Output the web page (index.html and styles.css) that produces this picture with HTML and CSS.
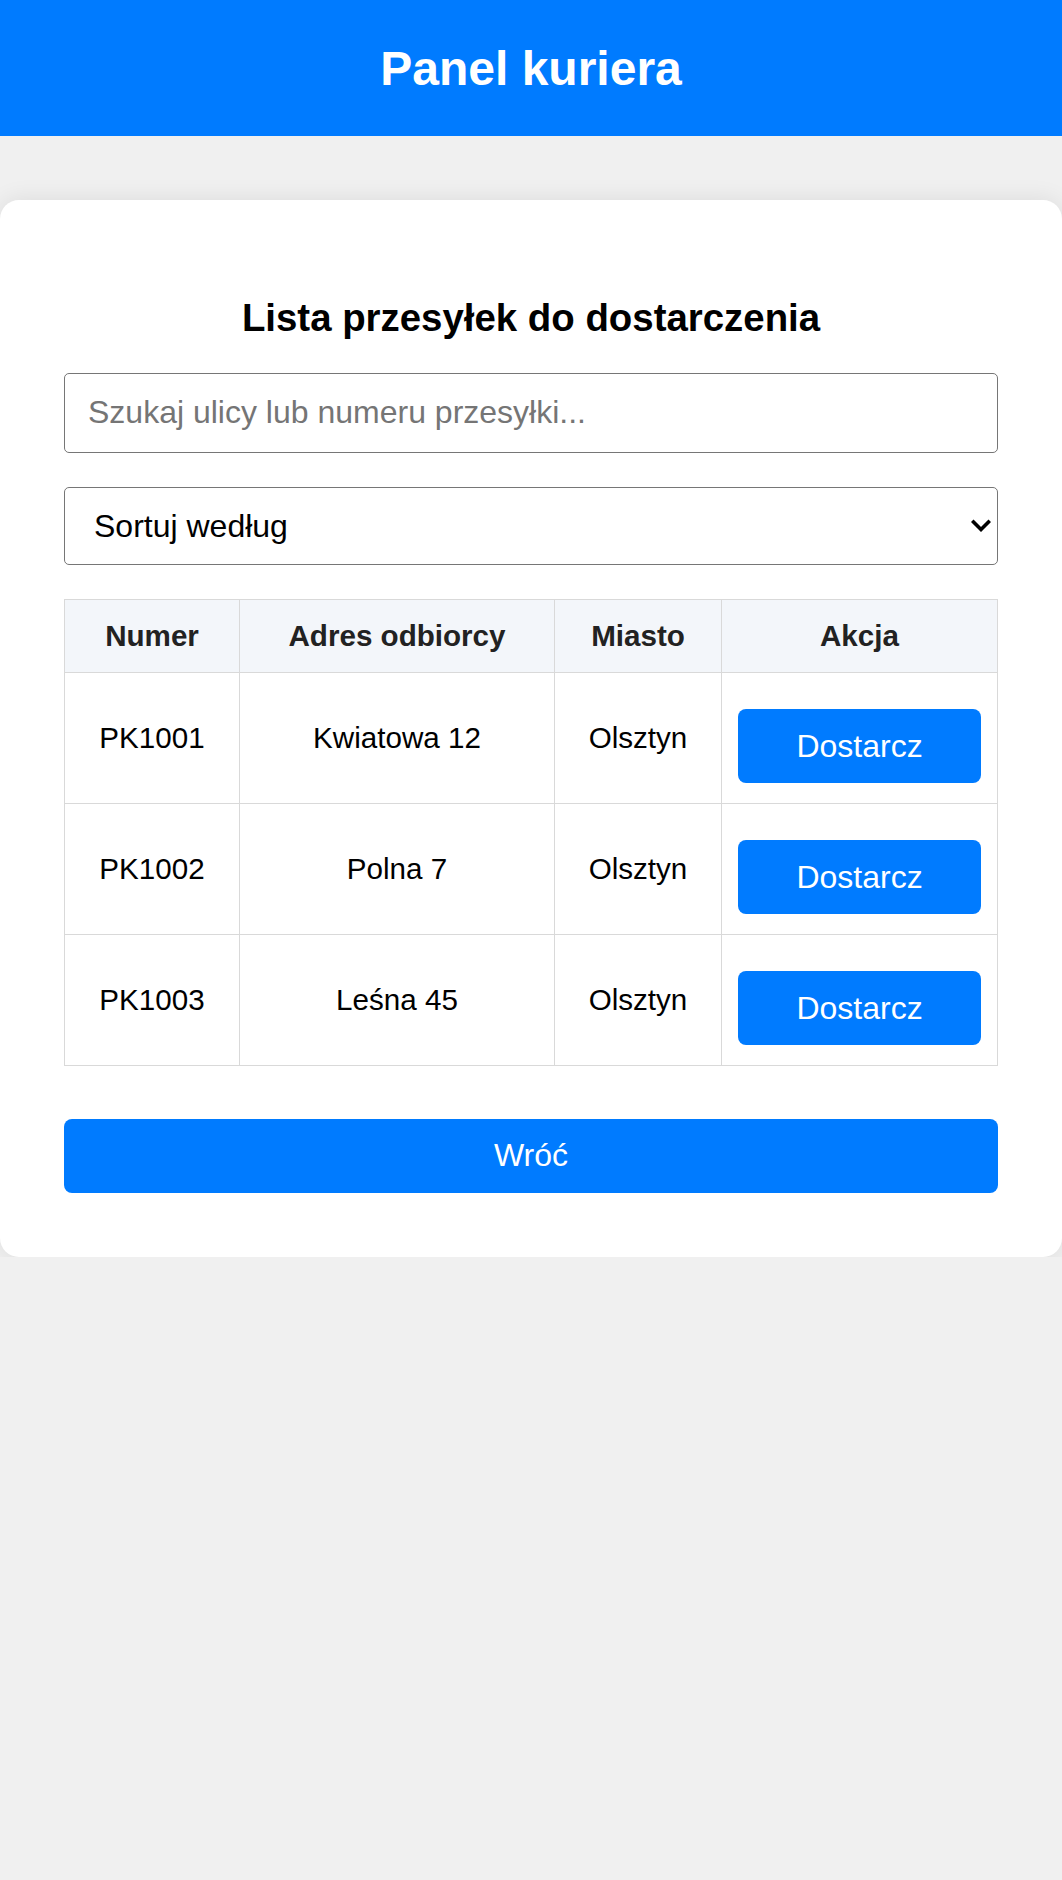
FILE: index.html
```html
<!DOCTYPE html>
<html lang="pl">
<head>
<meta charset="utf-8">
<title>Panel kuriera</title>
<link rel="stylesheet" href="styles.css">
</head>
<body>
<header class="topbar">
  <h1 class="topbar-title">Panel kuriera</h1>
</header>
<main class="card">
  <h2 class="card-title">Lista przesyłek do dostarczenia</h2>
  <input class="search" type="text" placeholder="Szukaj ulicy lub numeru przesyłki...">
  <div class="select-wrap">
    <select class="sort">
      <option>Sortuj według</option>
      <option>Numer</option>
      <option>Adres</option>
    </select>
    <svg class="select-arrow" width="20" height="14" viewBox="0 0 20 14"><polyline points="2.5,3 10,10.5 17.5,3" fill="none" stroke="#000" stroke-width="3.6" stroke-linecap="square"/></svg>
  </div>
  <table class="parcels">
    <colgroup>
      <col class="c-num"><col class="c-addr"><col class="c-city"><col class="c-act">
    </colgroup>
    <thead>
      <tr><th>Numer</th><th>Adres odbiorcy</th><th>Miasto</th><th>Akcja</th></tr>
    </thead>
    <tbody>
      <tr><td>PK1001</td><td>Kwiatowa 12</td><td>Olsztyn</td><td><button class="btn btn-deliver">Dostarcz</button></td></tr>
      <tr><td>PK1002</td><td>Polna 7</td><td>Olsztyn</td><td><button class="btn btn-deliver">Dostarcz</button></td></tr>
      <tr><td>PK1003</td><td>Leśna 45</td><td>Olsztyn</td><td><button class="btn btn-deliver">Dostarcz</button></td></tr>
    </tbody>
  </table>
  <button class="btn btn-back">Wróć</button>
</main>
</body>
</html>
```
FILE: styles.css
```css
html, body {
  margin: 0;
  padding: 0;
}
body {
  background: #f0f0f0;
  font-family: "Liberation Sans", Arial, sans-serif;
  color: #000;
}
.topbar {
  background: #007bff;
  color: #fff;
  text-align: center;
  padding: 8.5px 0;
}
.topbar-title {
  margin: 32px 0;
  font-size: 48px;
  font-weight: bold;
  line-height: normal;
}
.card {
  display: block;
  margin-top: 64px;
  background: #fff;
  border-radius: 19px;
  box-shadow: 0 0 24px rgba(0, 0, 0, 0.09);
  padding: 64px 64px 64px;
}
.card-title {
  margin: 31.5px 0 33px;
  font-size: 38.4px;
  font-weight: bold;
  text-align: center;
  line-height: normal;
}
.search {
  display: block;
  box-sizing: border-box;
  width: 100%;
  height: 80px;
  margin: 0 0 34px;
  padding: 0 23px;
  border: 1.2px solid #767676;
  border-radius: 5px;
  font-family: "Liberation Sans", Arial, sans-serif;
  font-size: 32px;
  color: #000;
  background: #fff;
  outline: none;
}
.search::placeholder {
  color: #757575;
}
.select-wrap {
  position: relative;
  margin: 0 0 34px;
}
.sort {
  display: block;
  box-sizing: border-box;
  width: 100%;
  height: 78px;
  padding: 0 50px 0 29px;
  border: 1.2px solid #767676;
  border-radius: 5px;
  font-family: "Liberation Sans", Arial, sans-serif;
  font-size: 32px;
  color: #000;
  background: #fff;
  appearance: none;
  -webkit-appearance: none;
  outline: none;
}
.select-arrow {
  position: absolute;
  right: 7px;
  top: 32px;
  pointer-events: none;
}
.parcels {
  width: 100%;
  table-layout: fixed;
  border-collapse: collapse;
  margin: 0;
  font-size: 29.6px;
}
.c-num { width: 175px; }
.c-addr { width: 315px; }
.c-city { width: 167px; }
.c-act { width: auto; }
.parcels th,
.parcels td {
  border: 1.3px solid #d9d9d9;
  padding: 20px 16px;
  text-align: center;
  vertical-align: middle;
  line-height: normal;
}
.parcels th {
  padding: 19.3px 16px;
  background: #f3f6fa;
  color: #222;
  font-weight: bold;
}
.parcels td {
  color: #000;
}
.btn {
  display: block;
  box-sizing: border-box;
  width: 100%;
  border: none;
  border-radius: 8px;
  background: #007bff;
  color: #fff;
  font-family: "Liberation Sans", Arial, sans-serif;
  font-size: 32px;
  line-height: 37px;
  padding: 18.5px 0;
  cursor: pointer;
}
.btn-deliver {
  margin-top: 16px;
}
.btn-back {
  margin-top: 52.6px;
}
```
